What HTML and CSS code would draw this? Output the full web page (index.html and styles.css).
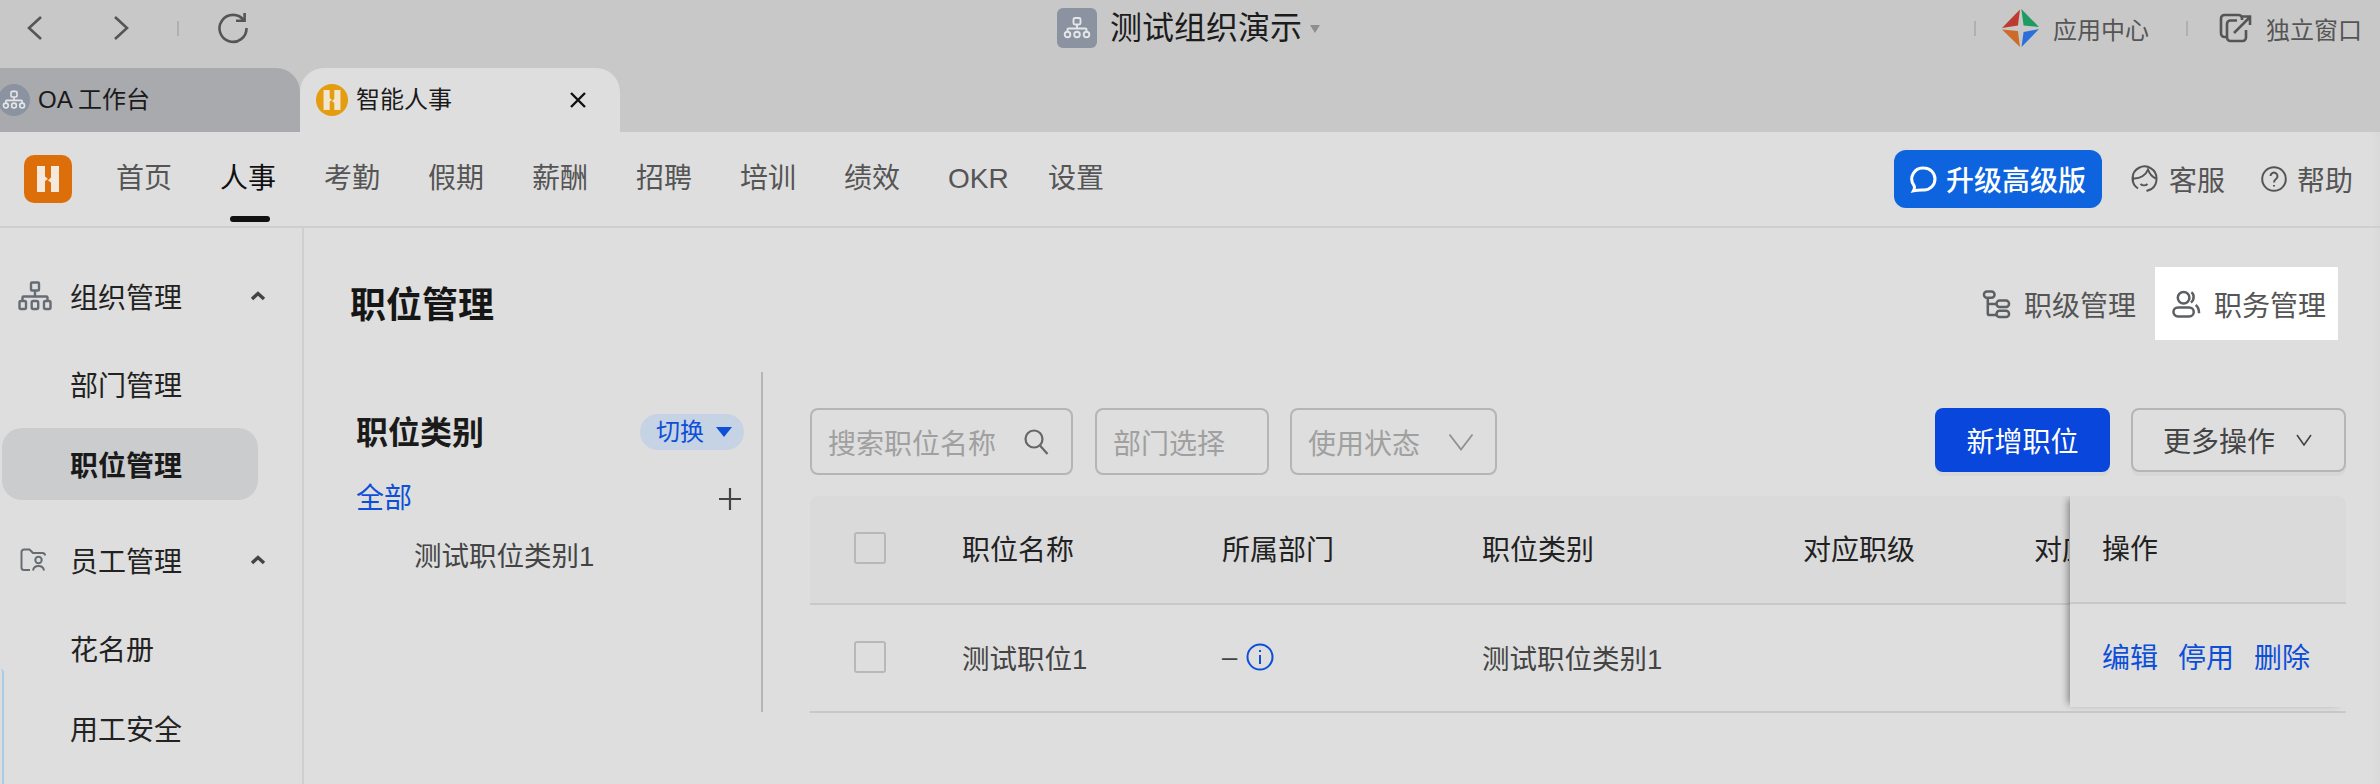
FILE: index.html
```html
<!DOCTYPE html>
<html lang="zh-CN">
<head>
    <meta charset="UTF-8">
    <meta name="viewport" content="width=device-width, initial-scale=1.0">
    <title>职位管理</title>
    <link rel="stylesheet" href="styles.css">
</head>
<body>
    <div class="chrome">
        <div class="title-row">
            <div class="browser-btns">
                <svg class="back" width="16" height="26" viewBox="0 0 16 26"><path d="M14 2L2 13l12 11" /></svg>
                <svg class="forward" width="16" height="26" viewBox="0 0 16 26"><path d="M2 2l12 11L2 24" /></svg>
                <span class="tick tick-nav"></span>
                <svg class="reload" width="32" height="32" viewBox="0 0 32 32"><path d="M27 8.5A13.5 13.5 0 1 0 29.5 16" /><path d="M19 8.8h8.6V1" /></svg>
            </div>
            <div class="org-title">
                <span class="org-badge">
                    <svg width="28" height="24" viewBox="0 0 28 24"><rect x="10.5" y="2" width="7" height="6.5" rx="1.5" /><path d="M14 8.5v4M4.5 16v-2.5a1 1 0 0 1 1-1h17a1 1 0 0 1 1 1V16" /><circle cx="4.5" cy="18.5" r="2.8" /><circle cx="14" cy="18.5" r="2.8" /><circle cx="23.5" cy="18.5" r="2.8" /></svg>
                </span>
                <span class="org-name">测试组织演示</span>
                <span class="org-caret"></span>
            </div>
            <div class="title-links">
                <span class="tick"></span>
                <span class="title-link link-apps">
                    <svg width="37" height="38" viewBox="0 0 36 37"><path fill="#bd3a30" d="M0 18.5L17.5 .5 15.5 16z" /><path fill="#1f9a62" d="M18.8 0L36 17.5 21 16z" /><path fill="#cc6c2a" d="M0 20l15.5 1.5L17.5 37z" /><path fill="#2a6fdc" d="M36 19.5L21 22.5 19 37z" /></svg>
                    应用中心
                </span>
                <span class="tick"></span>
                <span class="title-link link-window">
                    <svg class="window-icon" width="33" height="30" viewBox="0 0 33 30"><path d="M8 24H5.5A3.5 3.5 0 0 1 2 20.5V5.5A3.5 3.5 0 0 1 5.5 2h14A3.5 3.5 0 0 1 23 5.5V7" /><path d="M27 17v7.5a3.5 3.5 0 0 1-3.5 3.5H11.5A3.5 3.5 0 0 1 8 24.5V11a3.5 3.5 0 0 1 3.5-3.5H18" /><path d="M15 20L30 5M22 3.5h9V12" /></svg>
                    独立窗口
                </span>
            </div>
        </div>
        <div class="tabs">
            <div class="tab tab-idle">
                <span class="tab-icon tab-icon-org">
                    <svg width="24" height="22" viewBox="0 0 28 24"><rect x="10.5" y="2" width="7" height="6.5" rx="1.5" /><path d="M14 8.5v4M4.5 16v-2.5a1 1 0 0 1 1-1h17a1 1 0 0 1 1 1V16" /><circle cx="4.5" cy="18.5" r="2.8" /><circle cx="14" cy="18.5" r="2.8" /><circle cx="23.5" cy="18.5" r="2.8" /></svg>
                </span>
                <span class="tab-label">OA 工作台</span>
            </div>
            <div class="tab tab-active">
                <span class="tab-icon tab-icon-hr">
                    <svg width="18" height="20" viewBox="0 0 22 26"><path d="M0 0h8v10.5l3 2.5-3 2v11H0zM14 0h8v26h-8V16.5l-3-2 3-3z" /></svg>
                </span>
                <span class="tab-label">智能人事</span>
                <svg class="tab-close" width="18" height="16" viewBox="0 0 18 16"><path d="M2 1l14 14M16 1L2 15" /></svg>
            </div>
        </div>
    </div>

    <div class="workspace">
        <header class="nav">
            <span class="logo">
                <svg width="22" height="26" viewBox="0 0 22 26"><path d="M0 0h8v10.5l3 2.5-3 2v11H0zM14 0h8v26h-8V16.5l-3-2 3-3z" /></svg>
            </span>
            <a class="nav-item">首页</a>
            <a class="nav-item nav-current">人事</a>
            <a class="nav-item">考勤</a>
            <a class="nav-item">假期</a>
            <a class="nav-item">薪酬</a>
            <a class="nav-item">招聘</a>
            <a class="nav-item">培训</a>
            <a class="nav-item">绩效</a>
            <a class="nav-item nav-okr">OKR</a>
            <a class="nav-item">设置</a>
            <div class="nav-right">
                <button class="upgrade">
                    <svg width="28" height="28" viewBox="0 0 28 28"><path d="M14 3a11 11 0 0 1 0 22c-2 0-5-.3-10.5 .8 1.3-2.3 1.2-3.8 .5-5.3A11 11 0 0 1 14 3z" /></svg>
                    升级高级版
                </button>
                <span class="nav-link link-service">
                    <svg width="28" height="30" viewBox="0 0 28 30"><path d="M7 24.5A12 12 0 1 1 25.5 15c0 4.5-2 8-5 10l-5 2" /><path d="M2.5 14.5C9 15 15 11 17 5.5c1.5 4.5 4.5 7.5 8 9" /><path d="M9.5 20c2 1.8 5 1.8 7 0" /><path d="M2 12.5v5" /></svg>
                    客服
                </span>
                <span class="nav-link">
                    <svg width="26" height="26" viewBox="0 0 26 26"><circle cx="13" cy="13" r="11.8" /><path d="M9.5 10a3.5 3.5 0 1 1 5.5 3c-1.3 .9-2 1.700-2 3.5" /><path d="M13 19v1.5" /></svg>
                    帮助
                </span>
            </div>
        </header>

        <div class="layout">
            <aside class="sidebar">
                <div class="side-head">
                    <svg class="side-icon" width="34" height="30" viewBox="0 0 34 30"><rect x="13" y="1.5" width="8" height="8" rx="1" /><path d="M17 9.5v6M4.5 20v-3.5a1 1 0 0 1 1-1h23a1 1 0 0 1 1 1V20" /><rect x="1.5" y="20" width="6.5" height="8" rx="1.5" /><rect x="13.7" y="20" width="6.5" height="8" rx="1.5" /><rect x="26" y="20" width="6.5" height="8" rx="1.5" /></svg>
                    <span>组织管理</span>
                    <svg class="side-arrow" width="16" height="10" viewBox="0 0 16 10"><path d="M2 8l6-5.5L14 8" /></svg>
                </div>
                <a class="side-item">部门管理</a>
                <a class="side-item side-current">职位管理</a>
                <div class="side-head side-head-next">
                    <svg class="side-icon side-icon-folder" width="26" height="24" viewBox="0 0 26 24"><path d="M10 22H4a2.5 2.5 0 0 1-2.5-2.5V4A2.5 2.5 0 0 1 4 1.5h5.5L13 5h9.5A2.5 2.5 0 0 1 25 7.5" /><circle cx="18.5" cy="12" r="3.2" /><path d="M13 22.5c.5-3 3-4.5 5.500-4.500s5 1.500 5.500 4.500" /></svg>
                    <span>员工管理</span>
                    <svg class="side-arrow" width="16" height="10" viewBox="0 0 16 10"><path d="M2 8l6-5.5L14 8" /></svg>
                </div>
                <a class="side-item">花名册</a>
                <a class="side-item">用工安全</a>
                <span class="float-edge"></span>
            </aside>

            <main class="content">
                <div class="content-head">
                    <h1>职位管理</h1>
                    <div class="head-tabs">
                        <span class="head-tab">
                            <svg width="29" height="30" viewBox="0 0 30 30"><rect x="2" y="2" width="11" height="6.5" rx="3.2" /><path d="M6 8.5V24.5a2 2 0 0 0 2 2h7M6 15h9" /><rect x="15" y="11.5" width="13" height="6.5" rx="3.2" /><rect x="15" y="22" width="13" height="6.5" rx="3.2" /></svg>
                            职级管理
                        </span>
                        <span class="head-tab head-tab-on">
                            <svg width="29" height="30" viewBox="0 0 30 30"><circle cx="12" cy="8.5" r="6" /><rect x="1.5" y="18.5" width="21" height="9.5" rx="4.7" /><path d="M20 3c3 1.5 3.5 8-.5 10.5M24.5 16c2.5 2 3.5 5 3.5 8.5" /></svg>
                            职务管理
                        </span>
                    </div>
                </div>

                <div class="content-body">
                    <section class="cat-panel">
                        <div class="cat-head">
                            <h2>职位类别</h2>
                            <span class="switch"><span class="switch-text">切换</span><i class="switch-caret"></i></span>
                        </div>
                        <div class="cat-all">
                            <a>全部</a>
                            <svg width="22" height="22" viewBox="0 0 22 22"><path d="M11 0v22M0 11h22" /></svg>
                        </div>
                        <div class="cat-item">测试职位类别1</div>
                    </section>

                    <section class="job-panel">
                        <div class="toolbar">
                            <div class="filters">
                                <div class="field field-search">
                                    搜索职位名称
                                    <svg width="26" height="28" viewBox="0 0 26 28"><circle cx="11" cy="11" r="8.5" /><path d="M17 17.5l7.5 8.5" /></svg>
                                </div>
                                <div class="field field-dept">部门选择</div>
                                <div class="field field-state">
                                    使用状态
                                    <svg width="26" height="18" viewBox="0 0 26 18"><path d="M1.5 1.5L13 16.5 24.5 1.5" /></svg>
                                </div>
                            </div>
                            <div class="actions">
                                <button class="btn btn-primary">新增职位</button>
                                <button class="btn btn-more">
                                    更多操作
                                    <svg width="16" height="12" viewBox="0 0 16 12"><path d="M1 1l7 10 7-10" /></svg>
                                </button>
                            </div>
                        </div>

                        <div class="table-wrap">
                            <table class="job-table">
                                <colgroup>
                                    <col class="col-check">
                                    <col class="col-name">
                                    <col class="col-dept">
                                    <col class="col-cat">
                                    <col class="col-level">
                                    <col class="col-duty">
                                </colgroup>
                                <thead>
                                    <tr>
                                        <th><span class="check"></span></th>
                                        <th>职位名称</th>
                                        <th>所属部门</th>
                                        <th>职位类别</th>
                                        <th>对应职级</th>
                                        <th><span class="clipped">对应职务</span></th>
                                    </tr>
                                </thead>
                                <tbody>
                                    <tr>
                                        <td><span class="check"></span></td>
                                        <td>测试职位1</td>
                                        <td>
                                            <span class="dept-cell">–
                                                <svg width="28" height="28" viewBox="0 0 28 28"><circle cx="14" cy="14" r="12.5" /><path d="M14 12v9" /><path d="M14 7v2" /></svg>
                                            </span>
                                        </td>
                                        <td>测试职位类别1</td>
                                        <td></td>
                                        <td></td>
                                    </tr>
                                </tbody>
                            </table>
                            <div class="fixed-col">
                                <div class="fixed-head">操作</div>
                                <div class="fixed-cell">
                                    <a>编辑</a>
                                    <a>停用</a>
                                    <a>删除</a>
                                </div>
                            </div>
                        </div>
                    </section>
                </div>
            </main>
        </div>
    </div>
</body>
</html>
```

FILE: styles.css
```css
* {
    box-sizing: border-box;
}
html, body {
    margin: 0;
    width: 2380px;
    height: 784px;
    overflow: hidden;
}
body {
    font-family: "Liberation Sans", "Noto Sans CJK SC", sans-serif;
    font-size: 28px;
    color: #444;
    background: #dedede;
}
svg {
    display: block;
    flex: none;
    fill: none;
}
h1, h2 {
    margin: 0;
}
button {
    font: inherit;
    border: 0;
}

/* browser chrome */
.chrome {
    height: 132px;
    background: #c8c8c8;
}
.title-row {
    height: 56px;
    margin-bottom: 12px;
    display: grid;
    grid-template-columns: 1057px auto 1fr;
    align-items: center;
}
.browser-btns {
    display: flex;
    align-items: center;
    padding-left: 27px;
}
.browser-btns svg {
    stroke: #555;
    stroke-width: 2.6;
}
.forward {
    margin-left: 70px;
}
.tick {
    display: block;
    width: 2px;
    height: 15px;
    background: #aeb0b4;
}
.tick-nav {
    margin-left: 48px;
}
.reload {
    margin-left: 38px;
}
.org-title {
    display: flex;
    align-items: center;
}
.org-badge {
    width: 40px;
    height: 40px;
    border-radius: 6px;
    background: #8b93a0;
    display: flex;
    align-items: center;
    justify-content: center;
}
.org-badge svg, .tab-icon-org svg {
    stroke: #e4e6ea;
    stroke-width: 1.9;
}
.org-name {
    margin-left: 13px;
    font-size: 32px;
    line-height: 40px;
    color: #1c1c1c;
}
.org-caret {
    margin: 2px 0 0 8px;
    border: 5px solid transparent;
    border-top: 8px solid #8e8e8e;
    border-bottom: 0;
}
.title-links {
    display: flex;
    align-items: center;
    justify-content: flex-end;
    padding-right: 18px;
    font-size: 24px;
    color: #555;
}
.title-link {
    display: flex;
    align-items: center;
}
.link-apps {
    margin: 0 37px 0 26px;
    gap: 14px;
}
.link-window {
    margin-left: 31px;
    gap: 14px;
}
.window-icon {
    stroke: #555;
    stroke-width: 2.6;
}

.tabs {
    height: 64px;
    display: flex;
}
.tab {
    display: flex;
    align-items: center;
    height: 64px;
    font-size: 24px;
    color: #1a1a1a;
    border-radius: 24px 24px 0 0;
}
.tab-label {
    margin-bottom: 5px;
}
.tab-idle {
    width: 300px;
    background: #a9aaad;
    border-top-left-radius: 0;
    gap: 8px;
}
.tab-active {
    width: 320px;
    padding-left: 16px;
    background: #dedede;
    gap: 8px;
}
.tab-icon {
    width: 32px;
    height: 32px;
    border-radius: 50%;
    display: flex;
    align-items: center;
    justify-content: center;
}
.tab-icon-org {
    margin-left: -2px;
    background: #8b93a0;
}
.tab-icon-hr {
    background: #e49c10;
}
.tab-icon-hr svg {
    fill: #f2e6cf;
}
.tab-close {
    margin-left: 109px;
    stroke: #111;
    stroke-width: 2.4;
}

/* app */
.workspace {
    height: 652px;
    background: linear-gradient(90deg, #dedede 2372px, #d9d9d9 2380px);
}
.nav {
    height: 96px;
    display: flex;
    align-items: center;
    padding: 0 27px 0 24px;
    border-bottom: 2px solid #cfcfcf;
}
.logo {
    width: 48px;
    height: 48px;
    margin-right: 44px;
    border-radius: 10px;
    background: #dd6f0b;
    display: flex;
    align-items: center;
    justify-content: center;
}
.logo svg {
    fill: #f4e9dc;
}
.nav-item {
    width: 56px;
    margin-right: 48px;
    line-height: 40px;
    color: #555;
    white-space: nowrap;
    position: relative;
}
.nav-okr {
    margin-right: 44px;
}
.nav-current {
    color: #111;
}
.nav-current::after {
    content: "";
    position: absolute;
    left: 10px;
    top: 57px;
    width: 40px;
    height: 6px;
    border-radius: 3px;
    background: #111;
}
.nav-right {
    margin-left: auto;
    display: flex;
    align-items: center;
}
.upgrade {
    width: 208px;
    height: 58px;
    border-radius: 12px;
    background: #0e63df;
    color: #fff;
    font-weight: 500;
    display: flex;
    align-items: center;
    justify-content: center;
    gap: 8px;
    padding: 0;
}
.upgrade svg {
    stroke: #fff;
    stroke-width: 3;
}
.nav-link {
    display: flex;
    align-items: center;
    gap: 10px;
    color: #555;
    margin-left: 36px;
}
.link-service {
    margin-left: 29px;
}
.nav-link svg {
    stroke: #555;
    stroke-width: 2;
}

.layout {
    display: flex;
    height: 556px;
}
.sidebar {
    width: 304px;
    flex: none;
    border-right: 2px solid #cfcfcf;
    padding: 32px 44px 0 2px;
    position: relative;
    color: #222;
}
.side-head {
    height: 72px;
    display: flex;
    align-items: center;
    padding-left: 16px;
    white-space: nowrap;
}
.side-head span {
    margin-left: 18px;
    flex: none;
}
.side-head-next {
    margin-top: 24px;
}
.side-icon {
    stroke: #666c74;
    stroke-width: 2.4;
}
.side-icon-folder {
    margin: 0 6px 0 2px;
    stroke-width: 2;
}
.side-arrow {
    margin-left: 68px;
    stroke: #444;
    stroke-width: 3.4;
}
.side-item {
    display: flex;
    align-items: center;
    height: 72px;
    margin-top: 8px;
    padding-left: 68px;
    border-radius: 20px;
}
.side-head + .side-item {
    margin-top: 16px;
}
.side-current {
    background: #cbccce;
    font-weight: 700;
    color: #1a1a1a;
}
.float-edge {
    position: absolute;
    left: 0;
    top: 441px;
    bottom: 0;
    width: 4px;
    border-right: 2px solid #a9cbe8;
    border-top-right-radius: 12px;
}

.content {
    flex: 1;
    padding: 39px 34px 0 47px;
    min-width: 0;
}
.content-head {
    display: flex;
    align-items: center;
    justify-content: space-between;
    height: 73px;
    margin-right: 8px;
}
h1 {
    font-size: 36px;
    line-height: 48px;
    margin: 4px 0 0 -1px;
    color: #161616;
}
.head-tabs {
    display: flex;
    color: #555;
}
.head-tab {
    display: flex;
    align-items: center;
    gap: 13px;
    height: 73px;
    padding: 0 12px 0 17px;
}
.head-tab svg {
    stroke: #5c5f63;
    stroke-width: 2.6;
}
.head-tab-on {
    background: #fff;
    margin-left: 7px;
}

.content-body {
    display: flex;
    margin-top: 32px;
}
.cat-panel {
    width: 412px;
    height: 340px;
    flex: none;
    padding: 42px 17px 0 5px;
    border-right: 2px solid #b5b5b5;
}
.cat-head {
    display: flex;
    align-items: center;
    justify-content: space-between;
    height: 36px;
}
h2 {
    font-size: 32px;
    line-height: 40px;
    margin-top: 2px;
    color: #1a1a1a;
}
.switch {
    width: 104px;
    height: 36px;
    border-radius: 18px;
    background: #c5d3e4;
    color: #0e4fd8;
    font-size: 24px;
    display: flex;
    align-items: center;
    padding-left: 16px;
    gap: 12px;
}
.switch-text {
    margin-bottom: 5px;
}
.switch-caret {
    border: 8.5px solid transparent;
    border-top: 10px solid #0e4fd8;
    border-bottom: 0;
}
.cat-all {
    height: 40px;
    margin-top: 26px;
    display: flex;
    align-items: center;
    justify-content: space-between;
    padding-right: 3px;
    color: #0e4fd8;
}
.cat-all svg {
    stroke: #444;
    stroke-width: 2.2;
    margin-top: 6px;
}
.cat-item {
    height: 40px;
    line-height: 40px;
    margin-top: 21px;
    padding-left: 58px;
    font-size: 27.5px;
}

.job-panel {
    width: 1536px;
    margin-left: 47px;
    padding-top: 36px;
    flex: none;
}
.toolbar {
    display: flex;
    justify-content: space-between;
    height: 67px;
}
.filters {
    display: flex;
    gap: 22px;
}
.field {
    height: 67px;
    border: 2px solid #b5b5b5;
    border-radius: 8px;
    color: #a0a0a0;
    display: flex;
    align-items: center;
    padding-left: 16px;
}
.field svg {
    stroke: #666;
    stroke-width: 2.2;
}
.field-search {
    width: 263px;
    gap: 27px;
}
.field-dept {
    width: 174px;
}
.field-state {
    width: 207px;
    margin-left: -1px;
    gap: 28px;
}
.field-state svg {
    stroke: #909090;
    stroke-width: 1.8;
}
.actions {
    display: flex;
    gap: 21px;
}
.btn {
    height: 64px;
    border-radius: 8px;
    display: flex;
    align-items: center;
    box-shadow: 0 4px 0 rgba(0, 0, 0, 0.03);
}
.btn-primary {
    width: 175px;
    justify-content: center;
    padding: 0;
    background: #0846dc;
    color: #fff;
}
.btn-more {
    width: 215px;
    padding: 0 0 0 30px;
    gap: 21px;
    background: #dedede;
    border: 2px solid #b5b5b5;
    color: #444;
}
.btn-more svg {
    stroke: #444;
    stroke-width: 1.6;
}

.table-wrap {
    position: relative;
    margin-top: 21px;
    overflow: hidden;
}
.job-table {
    width: 1536px;
    table-layout: fixed;
    border-collapse: collapse;
}
.col-check {
    width: 152px;
}
.col-name, .col-dept {
    width: 260px;
}
.col-cat {
    width: 321px;
}
.col-level {
    width: 231px;
}
.col-duty {
    width: 312px;
}
.job-table th, .job-table td {
    height: 108px;
    padding: 0;
    text-align: left;
    font-weight: 400;
    border-bottom: 2px solid #c8c8c8;
}
.job-table th {
    background: #dadada;
    color: #222;
    padding-bottom: 4px;
}
.job-table td {
    font-size: 27.5px;
    padding-bottom: 2px;
}
.job-table th:first-child {
    border-top-left-radius: 8px;
}
.clipped {
    display: block;
    width: 35px;
    overflow: hidden;
    white-space: nowrap;
}
.check {
    display: block;
    width: 32px;
    height: 32px;
    margin-left: 44px;
    border: 2px solid #b8b8b8;
    border-radius: 3px;
}
.dept-cell {
    display: flex;
    align-items: center;
    gap: 9px;
}
.dept-cell svg {
    stroke: #0e4fd8;
    stroke-width: 2;
}
.fixed-col {
    position: absolute;
    top: 0;
    bottom: 6px;
    right: 0;
    width: 276px;
    background: #dedede;
    box-shadow: -5px 0 7px -3px rgba(0, 0, 0, 0.4);
}
.fixed-head {
    height: 106px;
    padding: 0 0 4px 32px;
    background: #dadada;
    color: #222;
    display: flex;
    align-items: center;
    border-top-right-radius: 8px;
}
.fixed-cell {
    border-top: 2px solid #c8c8c8;
    height: 106px;
    display: flex;
    align-items: center;
    gap: 20px;
    padding-left: 32px;
    color: #0e4fd8;
}
```
